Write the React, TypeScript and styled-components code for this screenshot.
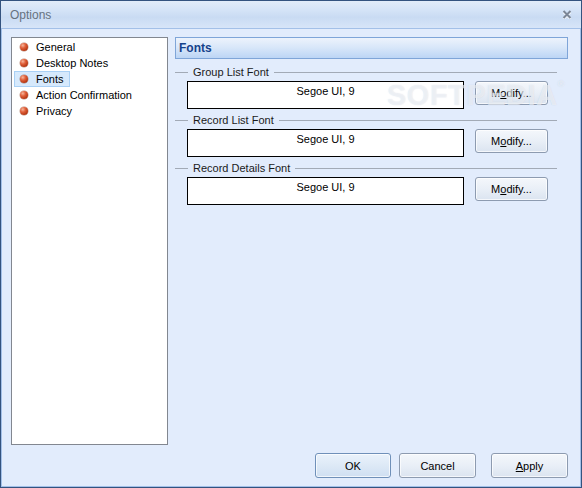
import styled, { createGlobalStyle } from "styled-components";

const GlobalStyle = createGlobalStyle`
  html, body {
    margin: 0;
    padding: 0;
    background: #ffffff;
  }
  * {
    box-sizing: border-box;
  }
`;

const Window = styled.div`
  position: relative;
  width: 582px;
  height: 488px;
  border: 1px solid #34537f;
  display: flex;
  flex-direction: column;
  font-family: "Segoe UI", "Liberation Sans", Arial, sans-serif;
  font-size: 11px;
  color: #000;
  overflow: hidden;
`;

const TitleBar = styled.div`
  height: 27px;
  flex: none;
  display: flex;
  align-items: center;
  justify-content: space-between;
  padding: 0 8px 0 9px;
  background: linear-gradient(#e2ecf9 0%, #d4e3f7 35%, #c9dbf3 60%, #d7e5f8 100%);
`;

const Title = styled.span`
  font-size: 12px;
  color: #66727f;
`;

const CloseGlyph = styled.svg`
  width: 10px;
  height: 9px;
  margin-right: 1px;
`;

const Body = styled.div`
  flex: 1;
  display: flex;
  flex-direction: column;
  gap: 8px;
  padding: 8px 12px 8px 9px;
  background: #e2ecfc;
  border: 1px solid #a3c0e8;
`;

const MainRow = styled.div`
  flex: 1;
  display: flex;
  gap: 7px;
`;

const NavList = styled.ul`
  width: 157px;
  margin: 0;
  padding: 1px 0 0 2px;
  list-style: none;
  background: #fff;
  border: 1px solid #828790;
  display: flex;
  flex-direction: column;
  align-items: flex-start;
`;

const NavItem = styled.li<{ $selected?: boolean }>`
  height: 16px;
  display: flex;
  align-items: center;
  gap: 8px;
  padding: 0 5px 0 5px;
  border: 1px solid ${({ $selected }) => ($selected ? "#a9d0f5" : "transparent")};
  background: ${({ $selected }) => ($selected ? "#d6e9fc" : "transparent")};
  white-space: nowrap;
`;

const Bullet = styled.span`
  width: 8px;
  height: 8px;
  border-radius: 50%;
  background: radial-gradient(circle at 35% 30%, #f6b69c 0%, #e0603a 35%, #b23410 75%, #8d2a0c 100%);
  box-shadow: 0 0 0 0.5px rgba(120, 40, 10, 0.5);
`;

const Panel = styled.div`
  flex: 1;
  display: flex;
  flex-direction: column;
`;

const PanelHeader = styled.div`
  height: 22px;
  display: flex;
  align-items: center;
  padding-left: 3px;
  border: 1px solid #7fa5d8;
  background: linear-gradient(#edf3fc 0%, #d7e6f9 50%, #bcd5f5 100%);
  font-size: 12px;
  font-weight: bold;
  color: #15428b;
`;

const Groups = styled.div`
  display: flex;
  flex-direction: column;
  gap: 4px;
  margin-top: 6px;
`;

const Group = styled.div`
  display: flex;
  flex-direction: column;
  gap: 2px;
`;

const Legend = styled.div`
  height: 14px;
  display: flex;
  align-items: center;
  padding-right: 11px;
  color: #1a1a1a;
`;

const Rule = styled.span<{ $grow?: boolean }>`
  height: 1px;
  background: #a2aab6;
  width: 13px;
  flex: ${({ $grow }) => ($grow ? 1 : "none")};
`;

const LegendText = styled.span`
  margin: 0 5px;
  white-space: nowrap;
`;

const FieldRow = styled.div`
  display: flex;
  align-items: flex-start;
  gap: 11px;
  padding-left: 12px;
`;

const FontBox = styled.div`
  width: 277px;
  height: 28px;
  padding-top: 2px;
  border: 1px solid #000;
  background: #fff;
  text-align: center;
  font-size: 11px;
  line-height: 14px;
`;

const Button = styled.button<{ $width?: number; $default?: boolean; $spaced?: boolean }>`
  width: ${({ $width }) => $width ?? 73}px;
  height: ${({ $width }) => ($width ? 25 : 24)}px;
  margin-left: ${({ $spaced }) => ($spaced ? 7 : 0)}px;
  padding: 0;
  border: 1px solid ${({ $default }) => ($default ? "#6f90b9" : "#8d9bb0")};
  border-radius: 3px;
  background: ${({ $default }) =>
    $default
      ? "linear-gradient(#eaf2fb 0%, #dde9f6 50%, #cfdff2 100%)"
      : "linear-gradient(#f4f7fb 0%, #e9eff7 50%, #dbe4f0 100%)"};
  box-shadow: inset 0 0 0 1px rgba(255, 255, 255, 0.7);
  font-family: inherit;
  font-size: 11px;
  color: #000;
`;

const ButtonRow = styled.div`
  height: 25px;
  display: flex;
  justify-content: flex-end;
  gap: 8px;
`;

const Watermark = styled.div`
  position: absolute;
  left: 386px;
  top: 78px;
  font-family: "Liberation Sans", Arial, sans-serif;
  font-size: 29px;
  font-weight: bold;
  letter-spacing: 0.5px;
  color: rgba(255, 255, 255, 0.55);
  text-shadow: 0 0 1px rgba(140, 160, 190, 0.35);
  pointer-events: none;

  sup {
    font-size: 9px;
    vertical-align: top;
  }
`;

const navItems = ["General", "Desktop Notes", "Fonts", "Action Confirmation", "Privacy"];

const fontGroups = ["Group List Font", "Record List Font", "Record Details Font"];

export default function App() {
  return (
    <>
      <GlobalStyle />
      <Window>
        <TitleBar>
          <Title>Options</Title>
          <CloseGlyph viewBox="0 0 10 9">
            <path d="M1.5 1.5 L8.5 8.5 M8.5 1.5 L1.5 8.5" stroke="#f4f8fd" strokeWidth="2.2" transform="translate(0 0.6)" />
            <path d="M1.5 1 L8.5 8 M8.5 1 L1.5 8" stroke="#7c8696" strokeWidth="2" />
          </CloseGlyph>
        </TitleBar>
        <Body>
          <MainRow>
            <NavList>
              {navItems.map((item) => (
                <NavItem key={item} $selected={item === "Fonts"}>
                  <Bullet />
                  {item}
                </NavItem>
              ))}
            </NavList>
            <Panel>
              <PanelHeader>Fonts</PanelHeader>
              <Groups>
                {fontGroups.map((name) => (
                  <Group key={name}>
                    <Legend>
                      <Rule />
                      <LegendText>{name}</LegendText>
                      <Rule $grow />
                    </Legend>
                    <FieldRow>
                      <FontBox>Segoe UI, 9</FontBox>
                      <Button>
                        M<u>o</u>dify...
                      </Button>
                    </FieldRow>
                  </Group>
                ))}
              </Groups>
            </Panel>
          </MainRow>
          <ButtonRow>
            <Button $width={76} $default>
              OK
            </Button>
            <Button $width={77}>Cancel</Button>
            <Button $width={77} $spaced>
              <u>A</u>pply
            </Button>
          </ButtonRow>
        </Body>
        <Watermark>
          SOFTPEDIA<sup>®</sup>
        </Watermark>
      </Window>
    </>
  );
}
